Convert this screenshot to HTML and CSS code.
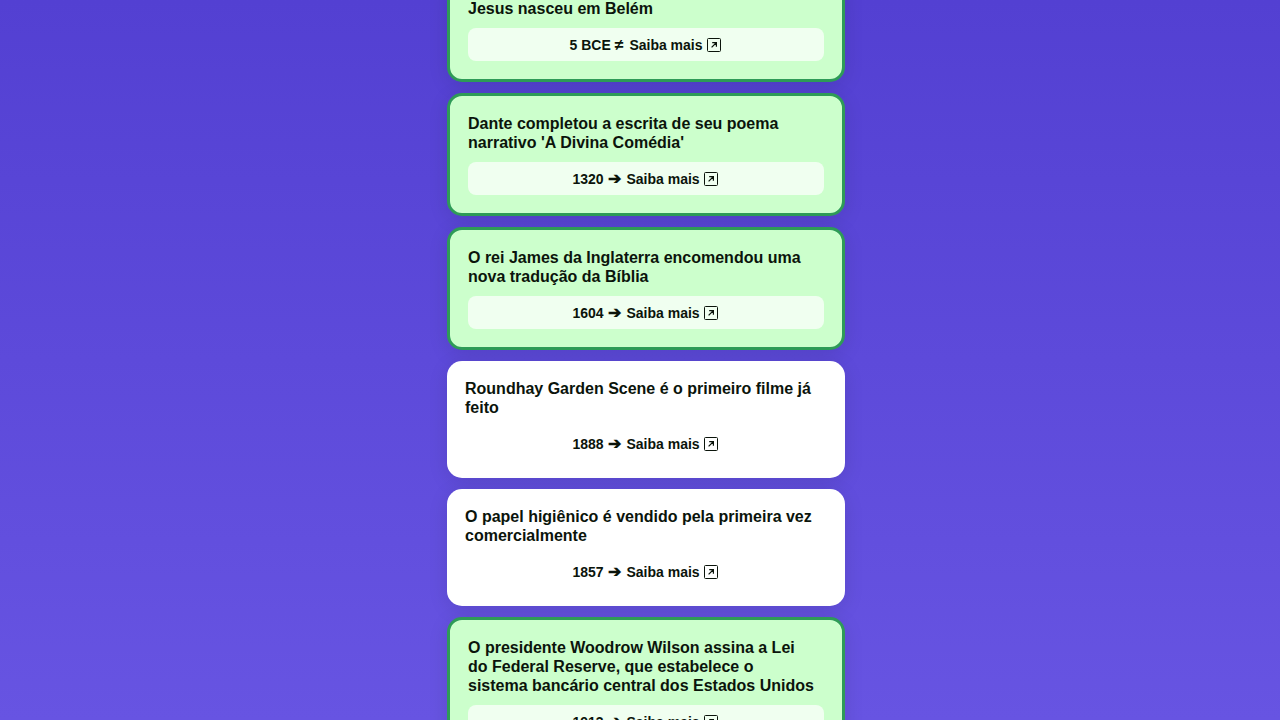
FILE: index.html
```html
<!DOCTYPE html>
<html lang="pt">
<head>
    <meta charset="UTF-8">
    <meta name="viewport" content="width=device-width, initial-scale=1.0">
    <title>Linha do tempo</title>
    <link rel="stylesheet" href="styles.css">
</head>
<body>
    <svg width="0" height="0" class="sprite" aria-hidden="true">
        <symbol id="external" viewBox="0 0 16 16">
            <rect x="1.5" y="1.5" width="13" height="13" rx="1" fill="none" stroke="currentColor"/>
            <path d="M5.6 10.4 L10 6 M6.2 5.6 H10.4 V9.8" fill="none" stroke="currentColor" stroke-width="1.2"/>
        </symbol>
    </svg>

    <main class="timeline">
        <article class="card correct">
            <h2>Jesus nasceu em Belém</h2>
            <div class="answer">5 BCE <span class="mark">≠</span> <a href="#">Saiba mais <svg class="icon"><use href="#external"/></svg></a></div>
        </article>

        <article class="card correct">
            <h2>Dante completou a escrita de seu poema narrativo 'A Divina Comédia'</h2>
            <div class="answer">1320 <span class="mark">➔</span> <a href="#">Saiba mais <svg class="icon"><use href="#external"/></svg></a></div>
        </article>

        <article class="card correct">
            <h2>O rei James da Inglaterra encomendou uma nova tradução da Bíblia</h2>
            <div class="answer">1604 <span class="mark">➔</span> <a href="#">Saiba mais <svg class="icon"><use href="#external"/></svg></a></div>
        </article>

        <article class="card">
            <h2>Roundhay Garden Scene é o primeiro filme já feito</h2>
            <div class="answer">1888 <span class="mark">➔</span> <a href="#">Saiba mais <svg class="icon"><use href="#external"/></svg></a></div>
        </article>

        <article class="card">
            <h2>O papel higiênico é vendido pela primeira vez comercialmente</h2>
            <div class="answer">1857 <span class="mark">➔</span> <a href="#">Saiba mais <svg class="icon"><use href="#external"/></svg></a></div>
        </article>

        <article class="card correct">
            <h2>O presidente Woodrow Wilson assina a Lei do Federal Reserve, que estabelece o sistema bancário central dos Estados Unidos</h2>
            <div class="answer">1913 <span class="mark">➔</span> <a href="#">Saiba mais <svg class="icon"><use href="#external"/></svg></a></div>
        </article>
    </main>
</body>
</html>
```

FILE: styles.css
```css
* {
    box-sizing: border-box;
}
body {
    margin: 0;
    height: 100vh;
    overflow: hidden;
    padding-left: 12px;
    font-family: "Liberation Sans", Arial, sans-serif;
    color: #0b140b;
    background: linear-gradient(#5340d2, #6754e2);
}
.sprite {
    position: absolute;
}
/* the list is scrolled a little past the top of the first card */
.timeline {
    display: flex;
    flex-direction: column;
    gap: 11px;
    width: 100%;
    max-width: 398px;
    margin: -22px auto 0;
}
.card {
    padding: 18px;
    background: #fff;
    border-radius: 15px;
    box-shadow: 0 4px 20px rgba(0, 0, 0, 0.1);
}
.card.correct {
    background: #ccffcc;
    border: 3px solid #2e9b57;
}
.card h2 {
    margin: 0 0 10px;
    padding-right: 8px;
    font-size: 16px;
    line-height: 19px;
}
.answer {
    height: 33px;
    padding: 6px;
    border-radius: 8px;
    background: rgba(255, 255, 255, 0.7);
    font-size: 14px;
    font-weight: bold;
    line-height: 21px;
    text-align: center;
}
.mark {
    font-size: 16px;
}
.answer a {
    margin-left: 2px;
    color: inherit;
    text-decoration: none;
}
.icon {
    width: 16px;
    height: 16px;
    vertical-align: -3px;
}
```
